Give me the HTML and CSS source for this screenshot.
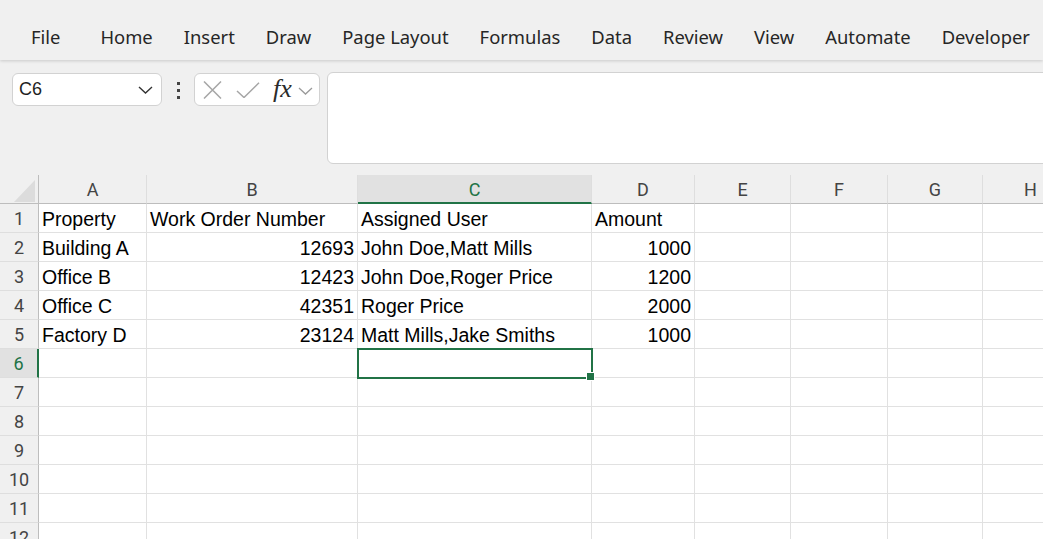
FILE: index.html
```html
<!DOCTYPE html>
<html>
<head>
<meta charset="utf-8">
<link rel="stylesheet" href="styles.css">
</head>
<body>
<div class="ribbon">
  <span class="tab tab-file">File</span>
  <span class="tab">Home</span>
  <span class="tab">Insert</span>
  <span class="tab">Draw</span>
  <span class="tab">Page Layout</span>
  <span class="tab">Formulas</span>
  <span class="tab">Data</span>
  <span class="tab">Review</span>
  <span class="tab">View</span>
  <span class="tab">Automate</span>
  <span class="tab">Developer</span>
</div>
<div class="formula-row">
  <div class="namebox">
    <span class="ref">C6</span>
    <svg class="chev" width="15" height="8" viewBox="0 0 15 8"><path d="M1 1 L7.5 7 L14 1" fill="none" stroke="#333" stroke-width="1.4"/></svg>
  </div>
  <div class="vdots"><i></i><i></i><i></i></div>
  <div class="fxbox">
    <svg class="ico" width="19" height="18" viewBox="0 0 19 18"><path d="M1 0.5 L18 17.5 M18 0.5 L1 17.5" stroke="#a6a6a6" stroke-width="1.5" fill="none"/></svg>
    <svg class="ico ico-check" width="24" height="16" viewBox="0 0 24 16"><path d="M1 9 L8 15.5 L23 0.8" stroke="#a6a6a6" stroke-width="1.5" fill="none"/></svg>
    <span class="fx">fx</span>
    <svg class="chev2" width="15" height="8" viewBox="0 0 15 8"><path d="M1 1 L7.5 7 L14 1" fill="none" stroke="#9a9a9a" stroke-width="1.3"/></svg>
  </div>
  <div class="finput"></div>
</div>
<div class="sheet">
  <div class="corner"><svg width="21" height="22" viewBox="0 0 21 22"><path d="M21 0 L21 22 L0 22 Z" fill="#dcdcdc"/></svg></div>
  <div class="ch">A</div><div class="ch">B</div><div class="ch ch-sel">C</div><div class="ch">D</div><div class="ch">E</div><div class="ch">F</div><div class="ch">G</div><div class="ch">H</div>

  <div class="rh">1</div><div class="c">Property</div><div class="c">Work Order Number</div><div class="c">Assigned User</div><div class="c">Amount</div><div class="c"></div><div class="c"></div><div class="c"></div><div class="c"></div>
  <div class="rh">2</div><div class="c">Building A</div><div class="c num">12693</div><div class="c">John Doe,Matt Mills</div><div class="c num">1000</div><div class="c"></div><div class="c"></div><div class="c"></div><div class="c"></div>
  <div class="rh">3</div><div class="c">Office B</div><div class="c num">12423</div><div class="c">John Doe,Roger Price</div><div class="c num">1200</div><div class="c"></div><div class="c"></div><div class="c"></div><div class="c"></div>
  <div class="rh">4</div><div class="c">Office C</div><div class="c num">42351</div><div class="c">Roger Price</div><div class="c num">2000</div><div class="c"></div><div class="c"></div><div class="c"></div><div class="c"></div>
  <div class="rh">5</div><div class="c">Factory D</div><div class="c num">23124</div><div class="c">Matt Mills,Jake Smiths</div><div class="c num">1000</div><div class="c"></div><div class="c"></div><div class="c"></div><div class="c"></div>
  <div class="rh rh-sel">6</div><div class="c"></div><div class="c"></div><div class="c sel"></div><div class="c"></div><div class="c"></div><div class="c"></div><div class="c"></div><div class="c"></div>
  <div class="rh">7</div><div class="c"></div><div class="c"></div><div class="c"></div><div class="c"></div><div class="c"></div><div class="c"></div><div class="c"></div><div class="c"></div>
  <div class="rh">8</div><div class="c"></div><div class="c"></div><div class="c"></div><div class="c"></div><div class="c"></div><div class="c"></div><div class="c"></div><div class="c"></div>
  <div class="rh">9</div><div class="c"></div><div class="c"></div><div class="c"></div><div class="c"></div><div class="c"></div><div class="c"></div><div class="c"></div><div class="c"></div>
  <div class="rh">10</div><div class="c"></div><div class="c"></div><div class="c"></div><div class="c"></div><div class="c"></div><div class="c"></div><div class="c"></div><div class="c"></div>
  <div class="rh">11</div><div class="c"></div><div class="c"></div><div class="c"></div><div class="c"></div><div class="c"></div><div class="c"></div><div class="c"></div><div class="c"></div>
  <div class="rh">12</div><div class="c"></div><div class="c"></div><div class="c"></div><div class="c"></div><div class="c"></div><div class="c"></div><div class="c"></div><div class="c"></div>
</div>
</body>
</html>
```

FILE: styles.css
```css
* { box-sizing: border-box; }
html, body {
  margin: 0;
  padding: 0;
  width: 1043px;
  height: 539px;
  overflow: hidden;
  background: #f0f0f0;
}
body {
  font-family: "Noto Sans", "Open Sans", sans-serif;
  color: #262626;
}

.ribbon {
  height: 60px;
  display: flex;
  align-items: center;
  padding: 14px 0 0 31px;
  gap: 31px;
  background: #f0f0f0;
  box-shadow: 0 1px 3px rgba(0, 0, 0, 0.16);
  position: relative;
  z-index: 2;
  white-space: nowrap;
}
.tab {
  font-size: 18.4px;
  color: #262626;
  line-height: 22px;
}
.tab-file { margin-right: 9px; }

.formula-row {
  display: flex;
  align-items: flex-start;
  padding: 12px 0 0 12px;
  height: 115px;
}
.namebox {
  margin-top: 1px;
  width: 150px;
  height: 33px;
  background: #fff;
  border: 1px solid #d2d2d2;
  border-radius: 6px;
  display: flex;
  align-items: center;
  justify-content: space-between;
  padding: 0 8px 0 6px;
}
.ref {
  font-family: "Liberation Sans", Arial, sans-serif;
  font-size: 18px;
  color: #1f1f1f;
}
.chev { margin-top: 1px; }
.vdots {
  width: 32px;
  height: 34px;
  display: flex;
  flex-direction: column;
  align-items: center;
  justify-content: center;
  gap: 4px;
  padding-top: 2px;
}
.vdots i {
  display: block;
  width: 3px;
  height: 3px;
  background: #444;
}
.fxbox {
  margin-top: 1px;
  width: 126px;
  height: 33px;
  background: #fff;
  border: 1px solid #d2d2d2;
  border-radius: 6px;
  display: flex;
  align-items: center;
  padding: 0 0 0 8px;
}
.ico { flex: none; }
.ico-check { margin-left: 14px; }
.fx {
  margin-left: 13px;
  font-family: "Liberation Serif", "DejaVu Serif", serif;
  font-style: italic;
  font-size: 26px;
  line-height: 22px;
  color: #2b2b2b;
  padding-bottom: 2px;
}
.chev2 { margin-left: 6px; margin-top: 2px; }
.finput {
  margin-left: 7px;
  flex: 1;
  margin-right: -12px;
  height: 92px;
  background: #fff;
  border: 1px solid #d2d2d2;
  border-radius: 6px;
}

.sheet {
  display: grid;
  width: max-content;
  grid-template-columns: 39px 108px 211px 234px 103px 96px 97px 95px 96px;
  grid-auto-rows: 29px;
  background: #fff;
  font-family: "Liberation Sans", Arial, sans-serif;
}
.corner {
  background: #f0f0f0;
  border-right: 1px solid #bdbdbd;
  border-bottom: 1px solid #bdbdbd;
  display: flex;
  align-items: flex-end;
  justify-content: flex-end;
  padding: 0 3px 1px 0;
}
.corner svg { display: block; }
.ch {
  background: #f0f0f0;
  border-right: 1px solid #dedede;
  border-bottom: 1px solid #bdbdbd;
  text-align: center;
  font-size: 18px;
  line-height: 29px;
  color: #444;
  font-family: "Roboto", "Liberation Sans", sans-serif;
}
.ch-sel {
  background: #e1e1e1;
  color: #217346;
  border-bottom: 2px solid #217346;
}
.rh {
  background: #f0f0f0;
  border-right: 1px solid #bdbdbd;
  border-bottom: 1px solid #dedede;
  text-align: center;
  font-size: 18px;
  line-height: 29px;
  color: #444;
  font-family: "Roboto", "Liberation Sans", sans-serif;
}
.rh-sel {
  background: #e1e1e1;
  color: #217346;
  border-right: 2px solid #217346;
}
.c {
  border-right: 1px solid #e1e1e1;
  border-bottom: 1px solid #e1e1e1;
  padding: 0 3px 0 3px;
  font-size: 19.5px;
  line-height: 30px;
  color: #000;
  white-space: nowrap;
  overflow: visible;
}
.num { text-align: right; }
.sel {
  position: relative;
  z-index: 1;
  outline: 2px solid #217346;
  outline-offset: -1px;
}
.sel::after {
  content: "";
  position: absolute;
  right: -4px;
  bottom: -4px;
  width: 7px;
  height: 7px;
  background: #217346;
  border: 1px solid #fff;
}
```
